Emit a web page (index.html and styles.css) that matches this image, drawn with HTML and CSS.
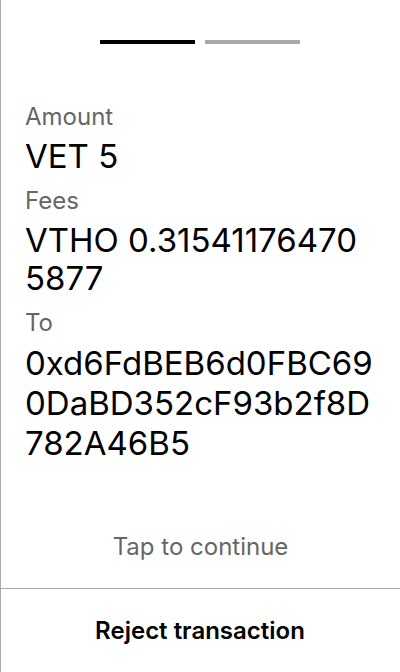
FILE: index.html
```html
<!DOCTYPE html>
<html>
<head>
<meta charset="utf-8">
<link rel="stylesheet" href="styles.css">
</head>
<body>
<div class="screen">
  <div class="main">
    <div class="steps">
      <span class="step active"></span>
      <span class="step"></span>
    </div>
    <div class="details">
      <div class="label">Amount</div>
      <div class="value">VET 5</div>
      <div class="label">Fees</div>
      <div class="value">VTHO 0.315411764705877</div>
      <div class="label">To</div>
      <div class="value address">0xd6FdBEB6d0FBC690DaBD352cF93b2f8D782A46B5</div>
    </div>
    <div class="tap">Tap to continue</div>
  </div>
  <div class="footer">Reject transaction</div>
</div>
</body>
</html>
```
FILE: styles.css
```css
html, body {
  margin: 0;
  padding: 0;
  background: #fff;
}
body {
  font-family: Inter, "Noto Sans", sans-serif;
  color: #000;
}
.screen {
  width: 400px;
  height: 672px;
  box-sizing: border-box;
  border-left: 1px solid #aaa;
  display: flex;
  flex-direction: column;
}
.main {
  flex: 1;
  display: flex;
  flex-direction: column;
}
.steps {
  display: flex;
  justify-content: center;
  gap: 10px;
  padding-top: 40px;
  margin-left: -1px;
}
.step {
  width: 95px;
  height: 4px;
  background: #aaa;
}
.step.active {
  background: #000;
}
.details {
  padding: 58px 24px 0 24px;
}
.label {
  font-size: 24px;
  line-height: 29px;
  color: #666;
  margin-bottom: 6px;
}
.value {
  font-size: 33px;
  line-height: 38px;
  margin-bottom: 11px;
  word-break: break-all;
}
.address {
  line-height: 40px;
}
.tap {
  margin-top: auto;
  text-align: center;
  font-size: 24px;
  line-height: 29px;
  color: #666;
  padding-bottom: 27px;
}
.footer {
  height: 83px;
  border-top: 1px solid #aaa;
  display: flex;
  align-items: center;
  justify-content: center;
  font-size: 24px;
  font-weight: 600;
  margin-left: -1px;
}
```
